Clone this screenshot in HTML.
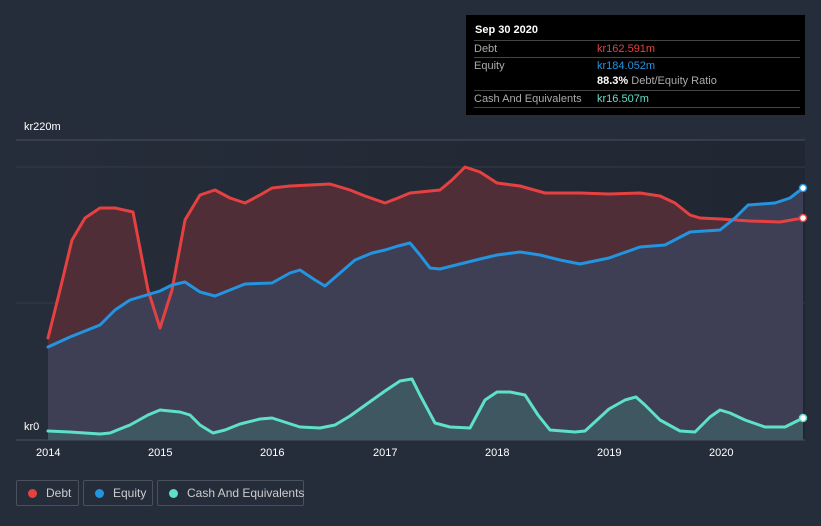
<!DOCTYPE html><html><head><style>
html,body{margin:0;width:821px;height:526px;overflow:hidden}
body{background:#262d3a;font-family:"Liberation Sans",sans-serif;position:relative}
.t{position:absolute;color:#fff;font-size:11px}
.tip{position:absolute;left:466px;top:15px;width:339px;height:100px;background:#000;}
.tip .r{position:absolute;left:8px;right:5px;border-top:1px solid #444;font-size:11px;color:#aaa;height:16px;line-height:16px}
.tip b{font-weight:bold}
.lg{position:absolute;top:480px;height:26px;border:1px solid #4a505c;border-radius:2px;color:#ccc;font-size:12px;line-height:24px;box-sizing:border-box;white-space:nowrap}
.lg i{display:inline-block;width:9px;height:9px;border-radius:50%;margin:0 9px 0 11px;vertical-align:-1px}
</style></head><body>
<svg width="821" height="526" style="position:absolute;left:0;top:0">
<defs><linearGradient id="bg" x1="0" x2="1"><stop offset="0" stop-color="#262d3a"/><stop offset="1" stop-color="#1c222c"/></linearGradient></defs>
<rect x="16" y="140" width="789" height="300" fill="url(#bg)" opacity=".6"/>
<line x1="16" y1="140" x2="805" y2="140" stroke="#4a505c"/>
<line x1="16" y1="167" x2="805" y2="167" stroke="#343a46"/>
<line x1="16" y1="303" x2="805" y2="303" stroke="#343a46"/>
<line x1="16" y1="440" x2="805" y2="440" stroke="#4a505c"/>
<polygon fill="#4f2e37" points="48,440 48,338 60,290 72,240 85,218 100,208 115,208 133,212 148,290 160,328 172,290 185,220 200,195 215,190 230,198 245,203 260,195 272,188 290,186 310,185 330,184 350,190 365,196 385,203 398,198 410,193 440,190 452,180 465,167 480,172 497,183 520,186 545,193 580,193 609,194 640,193 660,196 675,203 690,215 700,218 721,219 750,221 780,222 803,218 803,440"/>
<polygon fill="#3d3f56" opacity=".95" points="48,440 48,347 70,337 100,325 115,310 130,300 160,291 172,285 185,282 200,292 215,296 230,290 245,284 272,283 290,273 300,270 315,280 325,286 340,273 355,260 372,253 385,250 398,246 410,243 420,255 430,268 440,269 460,264 480,259 497,255 520,252 540,255 560,260 580,264 609,258 640,247 665,245 690,232 720,230 735,218 748,205 775,203 790,198 803,188 803,440"/>
<polygon fill="#3e5a62" opacity=".9" points="48,440 48,431 70,432 100,434 110,433 130,425 148,415 160,410 180,412 190,415 200,425 213,433 225,430 240,424 260,419 272,418 300,427 320,428 335,425 350,416 385,391 400,381 412,379 420,395 435,423 450,427 470,428 485,400 497,392 510,392 525,395 538,415 550,430 575,432 585,431 609,409 625,400 636,397 645,405 660,420 680,431 695,432 710,417 720,410 730,413 745,420 765,427 785,427 803,418 803,440"/>
<g fill="none" stroke-width="3" stroke-linejoin="round" stroke-linecap="round">
<polyline stroke="#e64141" points="48,338 60,290 72,240 85,218 100,208 115,208 133,212 148,290 160,328 172,290 185,220 200,195 215,190 230,198 245,203 260,195 272,188 290,186 310,185 330,184 350,190 365,196 385,203 398,198 410,193 440,190 452,180 465,167 480,172 497,183 520,186 545,193 580,193 609,194 640,193 660,196 675,203 690,215 700,218 721,219 750,221 780,222 803,218"/>
<polyline stroke="#2394df" points="48,347 70,337 100,325 115,310 130,300 160,291 172,285 185,282 200,292 215,296 230,290 245,284 272,283 290,273 300,270 315,280 325,286 340,273 355,260 372,253 385,250 398,246 410,243 420,255 430,268 440,269 460,264 480,259 497,255 520,252 540,255 560,260 580,264 609,258 640,247 665,245 690,232 720,230 735,218 748,205 775,203 790,198 803,188"/>
<polyline stroke="#5fe0c8" points="48,431 70,432 100,434 110,433 130,425 148,415 160,410 180,412 190,415 200,425 213,433 225,430 240,424 260,419 272,418 300,427 320,428 335,425 350,416 385,391 400,381 412,379 420,395 435,423 450,427 470,428 485,400 497,392 510,392 525,395 538,415 550,430 575,432 585,431 609,409 625,400 636,397 645,405 660,420 680,431 695,432 710,417 720,410 730,413 745,420 765,427 785,427 803,418"/>
</g>
<circle cx="803" cy="218" r="3.5" fill="#fff" stroke="#e64141" stroke-width="1.5"/>
<circle cx="803" cy="188" r="3.5" fill="#fff" stroke="#2394df" stroke-width="1.5"/>
<circle cx="803" cy="418" r="3.5" fill="#fff" stroke="#5fe0c8" stroke-width="1.5"/>
</svg>
<div class="t" style="left:24px;top:121px">kr220m</div>
<div class="t" style="left:24px;top:421px">kr0</div>
<div class="t" style="left:36px;top:447px">2014</div>
<div class="t" style="left:148px;top:447px">2015</div>
<div class="t" style="left:260px;top:447px">2016</div>
<div class="t" style="left:373px;top:447px">2017</div>
<div class="t" style="left:485px;top:447px">2018</div>
<div class="t" style="left:597px;top:447px">2019</div>
<div class="t" style="left:709px;top:447px">2020</div>
<div class="tip">
<div style="position:absolute;left:9px;top:9px;color:#fff;font-size:11px;font-weight:bold">Sep 30 2020</div>
<div class="r" style="top:25px">Debt<span style="position:absolute;left:123px;color:#e64141">kr162.591m</span></div>
<div class="r" style="top:42px">Equity<span style="position:absolute;left:123px;color:#2394df">kr184.052m</span></div>
<div class="r" style="top:58px;border:none"><span style="position:absolute;left:123px"><b style="color:#fff">88.3%</b> Debt/Equity Ratio</span></div>
<div class="r" style="top:75px">Cash And Equivalents<span style="position:absolute;left:123px;color:#5fe0c8">kr16.507m</span></div>
<div class="r" style="top:92px;height:0"></div>
</div>
<div class="lg" style="left:16px;width:63px"><i style="background:#e64141"></i>Debt</div>
<div class="lg" style="left:83px;width:70px"><i style="background:#2394df"></i>Equity</div>
<div class="lg" style="left:157px;width:147px"><i style="background:#5fe0c8"></i>Cash And Equivalents</div>
</body></html>
